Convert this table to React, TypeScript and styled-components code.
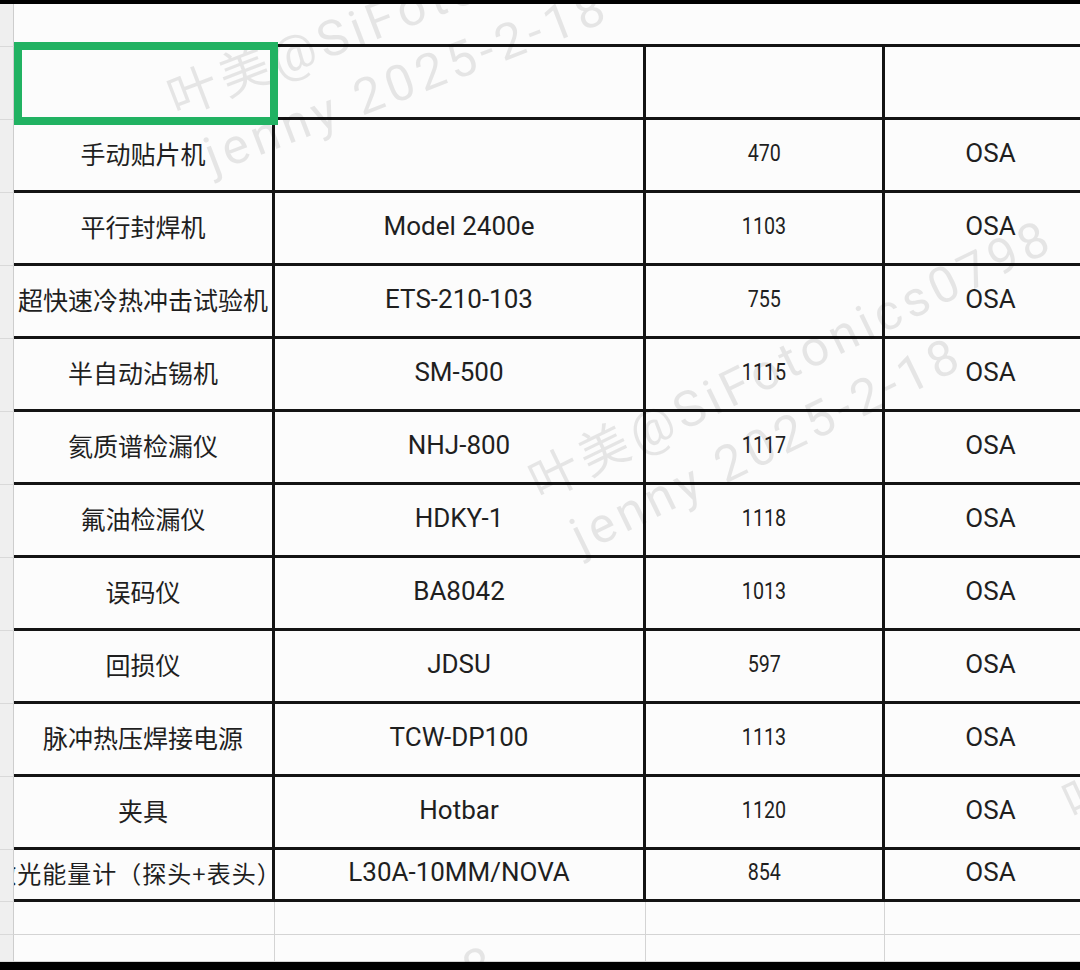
import React from 'react';
import styled, { createGlobalStyle } from 'styled-components';

const GlobalStyle = createGlobalStyle`
  html, body { margin: 0; padding: 0; background: #000; }
  body { font-family: Roboto, "Noto Sans CJK SC", sans-serif; }
  * { box-sizing: border-box; }
`;

const Frame = styled.div`
  width: 1080px;
  height: 970px;
  background: #000;
  padding: 4px 0 8px;
  display: flex;
  flex-direction: column;
`;

const Sheet = styled.div`
  position: relative;
  flex: 1;
  overflow: hidden;
  background: #fcfcfc;
  display: grid;
  grid-template-columns: 14px 261px 371px 239px 214px;
  grid-template-rows: 43px repeat(11, 73px) 52px 33px 1fr;
`;

const RowHead = styled.div`
  background: #efefef;
  border-right: 1px solid #cdcdcd;
  border-bottom: 1px solid #d9d9d9;
`;

type Variant = 'top' | 'table' | 'tail';

const Cell = styled.div<{ $variant: Variant; $overflowing?: boolean }>`
  display: flex;
  align-items: center;
  justify-content: center;
  overflow: hidden;
  white-space: nowrap;
  color: #1f1f1f;
  padding-bottom: ${p => (p.$variant === 'table' ? '5px' : '0')};
  padding-right: ${p => (p.$overflowing ? '12px' : '0')};
  border-bottom: ${p =>
    p.$variant === 'tail' ? '1px solid #d4d4d4' : '3px solid #141414'};
  border-right: ${p =>
    p.$variant === 'table'
      ? '3px solid #141414'
      : p.$variant === 'tail'
      ? '1px solid #d4d4d4'
      : 'none'};
`;

const NameText = styled.span<{ $small?: boolean }>`
  font-family: "Noto Sans CJK SC", sans-serif;
  font-size: ${p => (p.$small ? '24px' : '25px')};
  letter-spacing: ${p => (p.$small ? '1px' : '0')};
  font-weight: 400;
`;

const ModelText = styled.span`
  font-family: Roboto, "Noto Sans", sans-serif;
  font-size: 26px;
  font-weight: 400;
`;

const NumberText = styled.span`
  display: inline-block;
  font-family: Roboto, "Noto Sans", sans-serif;
  font-size: 24px;
  transform: scaleX(0.82);
`;

const DeptText = styled.span`
  font-family: Roboto, "Noto Sans", sans-serif;
  font-size: 26px;
`;

const Selection = styled.div`
  position: absolute;
  left: 14px;
  top: 38px;
  width: 264px;
  height: 83px;
  border: 8px solid #21b262;
  z-index: 3;
  pointer-events: none;
`;

const Watermark = styled.div<{ $x: number; $y: number; $angle: number }>`
  position: absolute;
  left: ${p => p.$x}px;
  top: ${p => p.$y}px;
  transform: rotate(${p => p.$angle}deg);
  transform-origin: 0 0;
  color: rgba(0, 0, 0, 0.09);
  font-family: Roboto, "Noto Sans CJK SC", sans-serif;
  font-size: 50px;
  line-height: 66px;
  letter-spacing: 5px;
  white-space: nowrap;
  pointer-events: none;
  z-index: 2;
`;

const MarkLine = styled.div<{ $indent?: number }>`
  padding-left: ${p => p.$indent ?? 0}px;
`;

const rows: [string, string, string, string][] = [
  ['手动贴片机', '', '470', 'OSA'],
  ['平行封焊机', 'Model 2400e', '1103', 'OSA'],
  ['超快速冷热冲击试验机', 'ETS-210-103', '755', 'OSA'],
  ['半自动沾锡机', 'SM-500', '1115', 'OSA'],
  ['氦质谱检漏仪', 'NHJ-800', '1117', 'OSA'],
  ['氟油检漏仪', 'HDKY-1', '1118', 'OSA'],
  ['误码仪', 'BA8042', '1013', 'OSA'],
  ['回损仪', 'JDSU', '597', 'OSA'],
  ['脉冲热压焊接电源', 'TCW-DP100', '1113', 'OSA'],
  ['夹具', 'Hotbar', '1120', 'OSA'],
  ['激光能量计（探头+表头）', 'L30A-10MM/NOVA', '854', 'OSA'],
];

const marks = [
  { x: 158, y: 66, angle: -21 },
  { x: 518, y: 452, angle: -26 },
  { x: 1052, y: 772, angle: -25 },
  { x: -40, y: 1168, angle: -25 },
];

export default function App() {
  return (
    <>
      <GlobalStyle />
      <Frame>
        <Sheet>
          <RowHead />
          {[0, 1, 2, 3].map(i => (
            <Cell key={`t${i}`} $variant="top" />
          ))}

          <RowHead />
          {[0, 1, 2, 3].map(i => (
            <Cell key={`h${i}`} $variant="table" />
          ))}

          {rows.map((r, idx) => {
            const last = idx === rows.length - 1;
            return (
              <React.Fragment key={idx}>
                <RowHead />
                <Cell $variant="table" $overflowing={last}>
                  <NameText $small={last}>{r[0]}</NameText>
                </Cell>
                <Cell $variant="table">
                  <ModelText>{r[1]}</ModelText>
                </Cell>
                <Cell $variant="table">
                  <NumberText>{r[2]}</NumberText>
                </Cell>
                <Cell $variant="table">
                  <DeptText>{r[3]}</DeptText>
                </Cell>
              </React.Fragment>
            );
          })}

          {[0, 1].map(k => (
            <React.Fragment key={`e${k}`}>
              <RowHead />
              {[0, 1, 2, 3].map(i => (
                <Cell key={i} $variant="tail" />
              ))}
            </React.Fragment>
          ))}

          <Selection />
          {marks.map((m, i) => (
            <Watermark key={i} $x={m.x} $y={m.y} $angle={m.angle}>
              <MarkLine>叶美@SiFotonics0798</MarkLine>
              <MarkLine $indent={14}>jenny 2025-2-18</MarkLine>
            </Watermark>
          ))}
        </Sheet>
      </Frame>
    </>
  );
}
